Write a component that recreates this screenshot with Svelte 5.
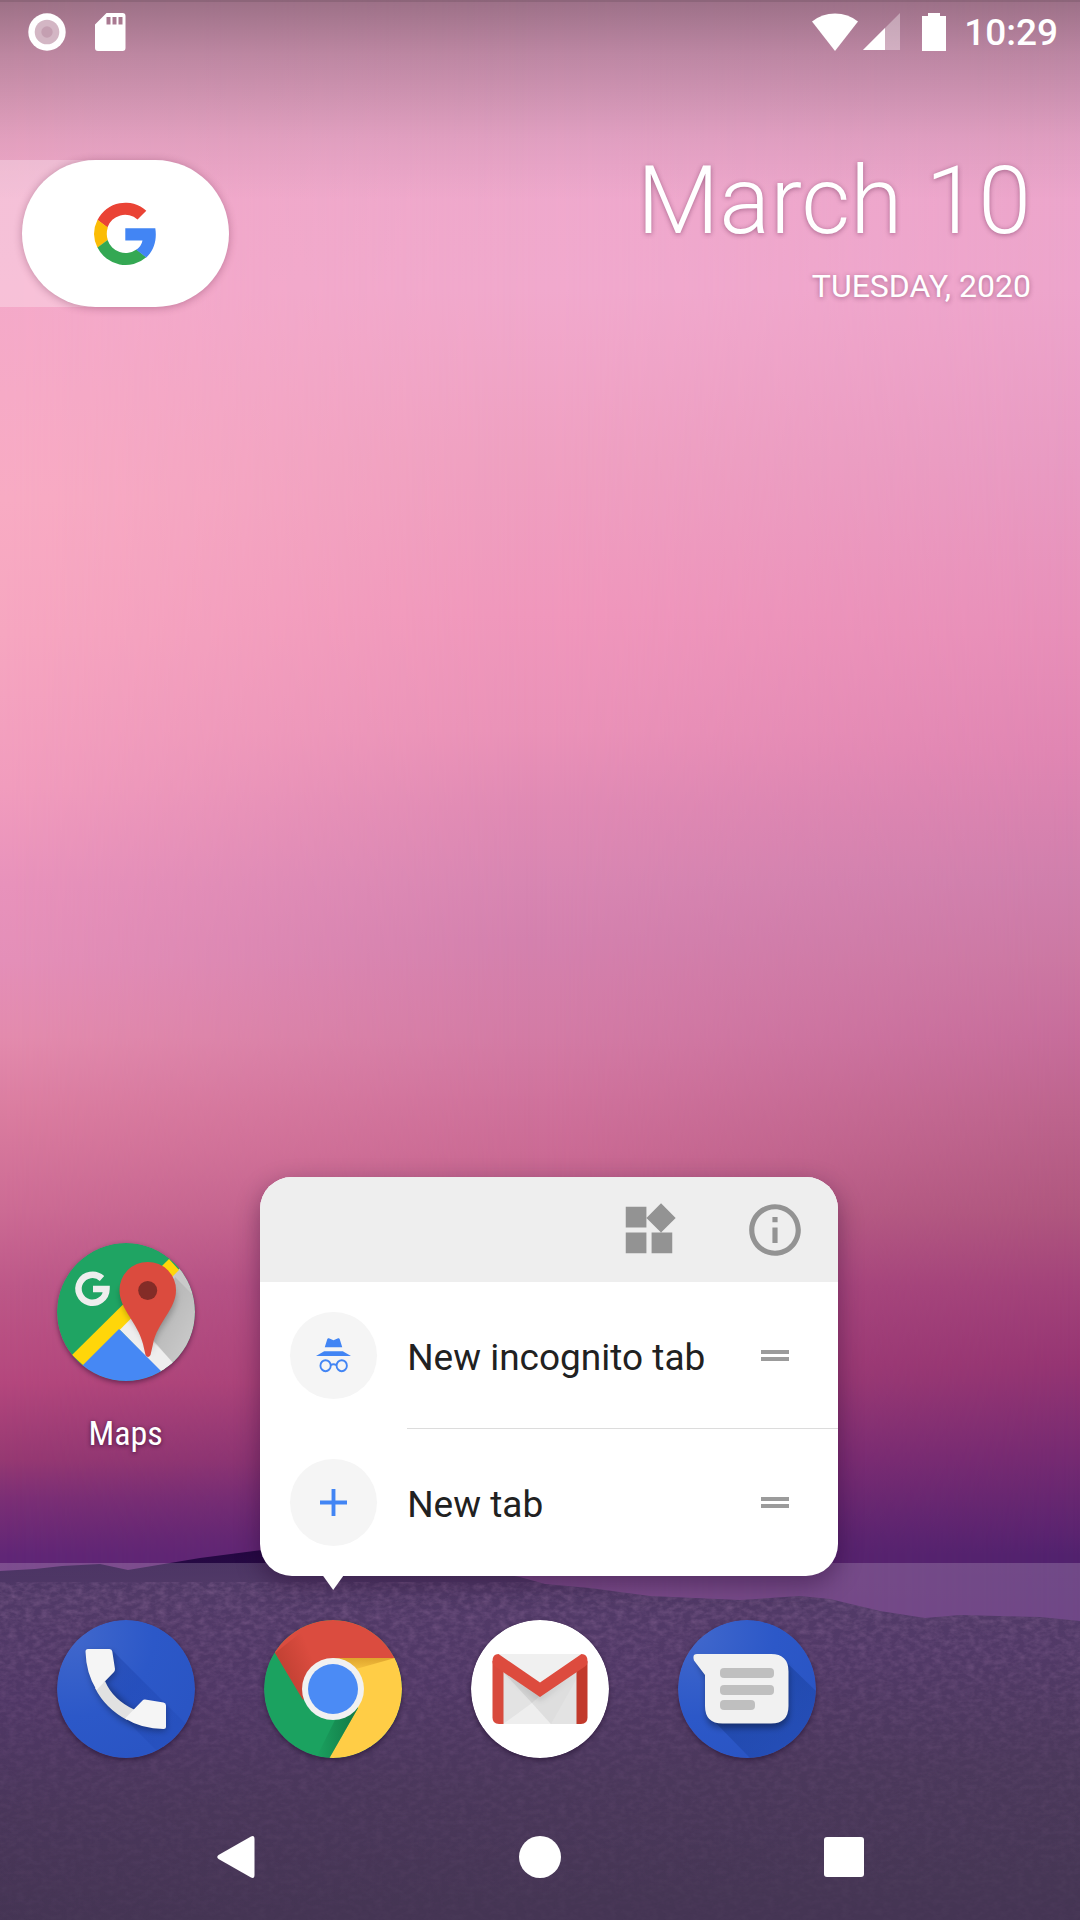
<script>
  const nav = ['Back', 'Home', 'Recents'];
  const shortcuts = [
    { id: 'incognito', label: 'New incognito tab' },
    { id: 'plus', label: 'New tab' }
  ];
  const dock = ['Phone', 'Chrome', 'Gmail', 'Messages'];
</script>

<div class="screen">
  <div class="wallpaper" aria-hidden="true">
    <div class="sky right"></div>
    <div class="sky middle"></div>
    <div class="sky left"></div>
    <svg class="ridge" viewBox="0 0 1080 400" preserveAspectRatio="none">
      <defs>
        <linearGradient id="hill" x1="0" y1="0" x2="0.15" y2="1">
          <stop offset="0" stop-color="#210440" />
          <stop offset="0.14" stop-color="#2c1047" />
          <stop offset="0.4" stop-color="#2f1249" />
          <stop offset="0.7" stop-color="#2c163f" />
          <stop offset="1" stop-color="#2b193c" />
        </linearGradient>
        <clipPath id="hillShape">
          <path d="M0 51 35 49 62 46 100 44 128 50 200 38 262 30 400 34 520 57 545 64 590 68 650 76 740 80 800 76 830 79 880 91 925 98 960 95 1040 97 1080 101 1080 400 0 400z" />
        </clipPath>
        <filter id="grain" x="0" y="0" width="100%" height="100%">
          <feTurbulence type="fractalNoise" baseFrequency="0.12 0.2" numOctaves="3" seed="4" />
          <feColorMatrix values="0 0 0 0 .5  0 0 0 0 .22  0 0 0 0 .5  .7 0 0 0 -.25" />
        </filter>
        <linearGradient id="fade" x1="0" y1="0" x2="0" y2="1">
          <stop offset="0" stop-color="#fff" stop-opacity=".8" /><stop offset=".6" stop-color="#fff" stop-opacity=".25" /><stop offset="1" stop-color="#fff" stop-opacity=".1" />
        </linearGradient>
        <mask id="grainMask"><rect width="1080" height="400" fill="url(#fade)" /></mask>
      </defs>
      <path fill="url(#hill)" d="M0 51 35 49 62 46 100 44 128 50 200 38 262 30 400 34 520 57 545 64 590 68 650 76 740 80 800 76 830 79 880 91 925 98 960 95 1040 97 1080 101 1080 400 0 400z" />
      <g clip-path="url(#hillShape)"><g mask="url(#grainMask)"><rect y="62" width="1080" height="338" filter="url(#grain)" /></g></g>
    </svg>
    <div class="dock-scrim"></div>
    <div class="top-scrim"></div>
  </div>

  <header class="status">
    <svg width="38" height="38" viewBox="0 0 38 38" role="img" aria-label="Recording">
      <circle cx="19" cy="19" r="18.700" fill="#fff" />
      <circle cx="19" cy="19" r="12.300" fill="#d3b6c4" />
      <circle cx="19" cy="19" r="5.700" fill="#c49fb1" />
    </svg>
    <svg class="sd" width="31" height="38" viewBox="0 0 31 38" role="img" aria-label="SD card">
      <path fill="#fff" fill-rule="evenodd" d="M11.500 0H27.500a3 3 0 0 1 3 3v32a3 3 0 0 1-3 3H3a3 3 0 0 1-3-3V11.500zM11.500 4v7.500h4V4zm6 0v7.500h4V4zm6 0v7.500h4V4z" />
    </svg>
    <span class="spring"></span>
    <svg width="46" height="38" viewBox="0 0 46 38" role="img" aria-label="Wi-Fi">
      <path fill="#fff" d="M0 8.500Q10 .5 23 .5T46 8.500L23 38z" />
    </svg>
    <svg class="signal" width="37" height="37" viewBox="0 0 37 37" role="img" aria-label="Signal">
      <path fill="#fff" fill-opacity=".35" d="M37 0v37H0z" />
      <path fill="#fff" d="M22 15v22H0z" />
    </svg>
    <svg class="battery" width="24" height="38" viewBox="0 0 24 38" role="img" aria-label="Battery">
      <path fill="#fff" d="M6 0h12v3h6v35H0V3h6z" />
    </svg>
    <time>10:29</time>
  </header>

  <section class="top">
    <div class="search-band">
      <button class="pill" aria-label="Google search">
        <svg class="google" width="62" height="63" viewBox="1 0 62 63">
          <path fill="#ea4335" d="M3.500 18A31 31 0 0 1 52.300 8.800L43.500 17.400A18.800 18.800 0 0 0 13.400 25.500z" />
          <path fill="#fbbc05" d="M3.500 17.800A31.500 31.500 0 0 0 3.500 45.800L13.800 38A20 20 0 0 1 13.800 25.500z" />
          <path fill="#34a853" d="M3.500 45.500A31.300 31.300 0 0 0 52.300 55.200L42.500 47.500A19 19 0 0 1 13.600 38z" />
          <path fill="#4285f4" d="M31.300 26.200H61.300C63 37 60.500 48 52.300 55.500L42.300 47.800Q47.500 44 48.500 38.500H31.300z" />
        </svg>
      </button>
    </div>
    <div class="date">
      <h1>March 10</h1>
      <p>TUESDAY, 2020</p>
    </div>
  </section>

  <main class="workspace">
    <a class="app" href="#maps">
      <svg class="icon" viewBox="0 0 138 138" aria-hidden="true">
        <defs>
          <clipPath id="disc"><circle cx="69" cy="69" r="69" /></clipPath>
          <linearGradient id="pinShade" x1="0" y1="0" x2="1" y2="1">
            <stop offset="0" stop-color="#000" stop-opacity=".14" />
            <stop offset=".7" stop-color="#000" stop-opacity="0" />
          </linearGradient>
          <filter id="soft" x="-30%" y="-30%" width="160%" height="160%"><feGaussianBlur stdDeviation="3" /></filter>
        </defs>
        <g clip-path="url(#disc)">
          <rect width="138" height="138" fill="#1fa463" />
          <path fill="#c9c9c9" d="M138 10 62 86 138 138z" />
          <path fill="#eee" d="M62 86 75 73 116 120 104 129z" />
          <path fill="#ffd60a" d="M112 16 122 27 27 123 15 112z" />
          <path fill="#4688f4" d="M62 86 106 130V140H8z" />
          <path fill="url(#pinShade)" d="M118 34 150 66V130L116 119 96 99z" />
          <path filter="url(#soft)" fill="#000" fill-opacity=".25" d="M63 50c0-18 56-16 56 2 0 22-19 30-26 58-7-28-30-36-30-60z" />
        </g>
        <path fill="#db4b3e" d="M90.700 19A28 28 0 0 1 119 47.500C119 66 100 80 96 101L93.500 112Q91 116 88.500 112L86 101C81 80 62.500 66 62.500 47.500A28 28 0 0 1 90.700 19z" />
        <circle cx="90.700" cy="47.500" r="9.500" fill="#832c27" />
        <path fill="none" stroke="#eee" stroke-width="6.500" d="M45 35.500A14 14 0 1 0 49.500 46H36" />
      </svg>
      <span>Maps</span>
    </a>

    <div class="popup" role="menu">
      <div class="popup-head">
        <button aria-label="Widgets">
          <svg width="62" height="62" viewBox="0 0 24 24" fill="#939393"><path d="M13 13v8h8v-8h-8zM3 21h8v-8H3v8zM3 3v8h8V3H3zm13.660-1.310L11 7.340 16.660 13l5.660-5.660-5.660-5.650z" /></svg>
        </button>
        <button aria-label="App info">
          <svg width="62" height="62" viewBox="0 0 24 24" fill="#939393"><path d="M11 17h2v-6h-2v6zm1-15C6.480 2 2 6.480 2 12s4.480 10 10 10 10-4.480 10-10S17.520 2 12 2zm0 18c-4.410 0-8-3.590-8-8s3.590-8 8-8 8 3.590 8 8-3.590 8-8 8zM11 9h2V7h-2v2z" /></svg>
        </button>
      </div>
      {#each shortcuts as s (s.id)}
        <button class="shortcut" role="menuitem">
          <span class="bubble">
            {#if s.id === 'incognito'}
              <svg width="35" height="35" viewBox="0 0 34 32" preserveAspectRatio="none">
                <path fill="#4285f4" d="M11 1q.5-1 1.500-.7L17 2l4.500-1.700q1-.3 1.500.7l2.500 7.500h-17zM8 12h18l8 4.500H0z" />
                <g fill="none" stroke="#4285f4" stroke-width="1.800"><circle cx="9.300" cy="25.300" r="5" /><circle cx="25" cy="25.300" r="5" /><path d="M14 24.700q3-1.500 6 0" /></g>
              </svg>
            {:else}
              <svg width="27" height="27" viewBox="0 0 28 28"><path fill="#4285f4" d="M12 0h4v12h12v4H16v12h-4V16H0v-4h12z" /></svg>
            {/if}
          </span>
          <span class="label">
            <span class="name">{s.label}</span>
            <svg width="28" height="11" viewBox="0 0 28 11" fill="#9b9b9b"><path d="M0 0h28v4H0zM0 7h28v4H0z" /></svg>
          </span>
        </button>
      {/each}
    </div>
  </main>

  <nav class="dock">
    {#each dock as name (name)}
      <a class="app" href="#{name.toLowerCase()}" aria-label={name}>
        <svg class="icon" viewBox="0 0 138 138" aria-hidden="true">
          {#if name === 'Phone'}
            <defs>
              <radialGradient id="blue" cx="0.100" cy="0.100" r="1"><stop offset="0" stop-color="#4168cc" /><stop offset=".6" stop-color="#2c58c8" /><stop offset="1" stop-color="#2a55c4" /></radialGradient>
              <linearGradient id="longShade" x1="0" y1="0" x2="1" y2="1"><stop offset="0" stop-color="#12349a" stop-opacity=".35" /><stop offset=".9" stop-color="#12349a" stop-opacity=".08" /></linearGradient>
            </defs>
            <circle cx="69" cy="69" r="69" fill="url(#blue)" />
            <g clip-path="url(#disc)"><path fill="url(#longShade)" d="M55 30 138 113V138H107L39 70z" /></g>
            <path filter="url(#soft)" fill="#000" fill-opacity=".3" d="M30 32H56L59 53 49 64 77 91 88 84 109 87V111C60 114 30 75 30 32z" />
            <path fill="#e1e1e1" d="M48 61Q56 80 78 90L70 100Q48 88 38 68z" />
            <path fill="#f5f5f5" d="M31 29H52.500Q55 29 55.300 31.500L58 49Q58 51 57 52L39.500 70Q29 53 28.500 31.500 28.500 29 31 29z" />
            <path fill="#f5f5f5" d="M88 79.500 106.500 82.500Q109 83 109 85.500V106.500Q109 109 106.500 109 85 109 68 98.500L85.500 80.500Q86.500 79.300 88 79.500z" />
          {:else if name === 'Chrome'}
            <defs>
              <linearGradient id="redShade" x1="0" y1=".6" x2=".6" y2=".3"><stop offset="0" stop-color="#8e2a1c" stop-opacity=".4" /><stop offset="1" stop-color="#8e2a1c" stop-opacity="0" /></linearGradient>
              <linearGradient id="yellowShade" x1="0" y1="0" x2="0" y2="1"><stop offset="0" stop-color="#c98a1d" stop-opacity=".6" /><stop offset="1" stop-color="#c98a1d" stop-opacity=".2" /></linearGradient>
              <linearGradient id="greenShade" x1="1" y1="0" x2="0" y2="0"><stop offset="0" stop-color="#0a5c33" stop-opacity=".6" /><stop offset="1" stop-color="#0a5c33" stop-opacity="0" /></linearGradient>
            </defs>
            <g clip-path="url(#disc)">
              <rect width="138" height="138" fill="#1ba260" />
              <path fill="#db4c3f" d="M11 33 0 0H138V38H69L39 80z" />
              <path fill="url(#redShade)" d="M11 33 40 10 69 38 39 80z" />
              <path fill="#ffcd46" d="M69 38H138V138H65.500L94 88z" />
              <path fill="url(#yellowShade)" d="M69 38H131L92 49z" />
              <path fill="url(#greenShade)" d="M94 88 65.500 138H52L72 98z" />
            </g>
            <circle cx="69" cy="69" r="31" fill="#f1f1f1" />
            <circle cx="69" cy="69" r="25" fill="#4b8bf5" />
          {:else if name === 'Gmail'}
            <circle cx="69" cy="69" r="69" fill="#fff" />
            <path fill="#f0f0f0" d="M27 34H111V80H27z" />
            <path fill="#e3e3e3" d="M32 50 69 76 106 50V104H32z" />
            <path fill="#d3d3d3" d="M32 52 69 76 61 83z" />
            <path fill="#eee" d="M32 104 61 83 80 104z" />
            <path fill="#dadada" d="M61 83 69 76 106 50V58L80 104z" fill-opacity=".6" />
            <path filter="url(#soft)" fill="#000" fill-opacity=".2" d="M32 52 69 80 106 52 69 76z" />
            <path fill="#d84a3d" d="M21.500 41H32.500V104H28Q21.500 104 21.500 97.500z" />
            <path fill="#c2392b" d="M105.500 50 116.500 41V97.500Q116.500 104 110 104H105.500z" />
            <path fill="#dd4b3e" d="M21.500 41Q21.500 34 27.500 34L69 62.500 110.500 34Q116.500 34 116.500 41 116.500 45 114 46.500L69 77 24 46.500Q21.500 45 21.500 41z" />
          {:else}
            <defs><linearGradient id="msgShade" x1="0" y1="0" x2="1" y2="1"><stop offset="0" stop-color="#10307f" stop-opacity=".5" /><stop offset="1" stop-color="#1c43a2" stop-opacity=".3" /></linearGradient></defs>
            <circle cx="69" cy="69" r="69" fill="url(#blue)" />
            <g clip-path="url(#disc)">
              <path fill="url(#msgShade)" d="M108 42 138 71V138H72L33 98z" />
              <path filter="url(#soft)" fill="#000" fill-opacity=".35" d="M18 40H93Q111 40 111 56V92Q111 108 93 108H45Q28 108 28 92V58z" />
            </g>
            <path fill="#f1f1f1" d="M19 34H93Q110.500 34 110.500 51.500V86Q110.500 103.500 93 103.500H44.500Q27 103.500 27 86V55L16 40.500Q14 34 19 34z" />
            <g fill="#bfbfbf"><rect x="42" y="48" width="54" height="10" rx="4" /><rect x="42" y="65" width="54" height="10" rx="4" /><rect x="42" y="80" width="35" height="10" rx="4" /></g>
          {/if}
        </svg>
      </a>
    {/each}
  </nav>

  <nav class="keys">
    {#each nav as name (name)}
      <button aria-label={name}>
        <svg width="42" height="42" viewBox="0 0 42 42" fill="#fff">
          {#if name === 'Back'}
            <path d="M3.500 19 36 .5Q39.500-1 39.500 3V39Q39.500 43 36 41.500L3.500 23Q1 21 3.500 19z" />
          {:else if name === 'Home'}
            <circle cx="21" cy="21" r="21" />
          {:else}
            <rect x="1" y="1" width="40" height="40" rx="3" />
          {/if}
        </svg>
      </button>
    {/each}
  </nav>
</div>

<style>
  :global(body) { margin: 0; }
  .screen {
    position: relative;
    min-height: 100vh;
    display: flex;
    flex-direction: column;
    overflow: hidden;
    isolation: isolate;
    font-family: Roboto, "Noto Sans", sans-serif;
    color: #fff;
  }
  button { border: 0; padding: 0; background: none; font: inherit; color: inherit; cursor: pointer; }
  a { color: inherit; text-decoration: none; }
  svg { display: block; flex: none; }

  .wallpaper, .sky { position: absolute; inset: 0; }
  .wallpaper { z-index: -1; }
  .right {
    background: linear-gradient(180deg, #eaa8cb 0, #eea5cc 15%, #e99bc3 24%, #e88fb9 33%, #e186b3 39%, #d07fac 46%, #cc78a3 50%, #c76d9b 54%, #bd648d 58%, #b0577f 63%, #a3437a 67%, #963573 71%, #752a72 76%, #5a2470 80%, #52226e 81%);
  }
  .middle {
    background: linear-gradient(180deg, #eaa8cb 0, #f1a9cd 15%, #efa0c1 24%, #f097bc 32%, #ea92b8 38%, #e08ab4 42%, #d886b2 46%, #d481ae 49%, #d37ba5 54%, #d0739d 57%, #cb6b95 60%, #bd5f8a 63%, #ab4880 67%, #a03f75 72%, #822f73 76%, #5f2570 80%);
    mask-image: linear-gradient(90deg, #000 50%, transparent);
  }
  .left {
    background: linear-gradient(180deg, #eaa8c8 0, #f4a9c9 15%, #f8abc3 26%, #f6a6c0 33%, #f19cbd 41%, #e892bb 46%, #e48fb8 50%, #e38bad 54%, #da7c9f 58%, #cc6b94 63%, #bd5888 67%, #b4477d 72%, #963972 76%, #7c2f75 78%, #602676 81%);
    mask-image: linear-gradient(90deg, #000, transparent 50%);
  }
  .ridge { position: absolute; left: 0; bottom: 0; width: 100%; height: 400px; }
  .dock-scrim {
    position: absolute; left: 0; right: 0; bottom: 0; height: 357px;
    background: linear-gradient(180deg, rgba(255,255,255,.18), rgba(255,255,255,.12));
  }
  .top-scrim {
    position: absolute; left: 0; right: 0; top: 0; height: 200px;
    background: linear-gradient(180deg, rgba(0,0,0,.4) 2px, rgba(0,0,0,.33) 2px, rgba(0,0,0,.2) 27%, rgba(0,0,0,.06) 68%, transparent);
  }

  .status { display: flex; align-items: center; height: 63px; padding: 0 22px 0 28px; }
  .sd { margin-left: 29px; }
  .spring { flex: 1; }
  .signal { margin-left: 5px; }
  .battery { margin: 0 18px 0 22px; }
  time { padding-top: 3px; font-size: 37px; line-height: 42px; font-weight: 500; }

  .top { display: flex; justify-content: space-between; align-items: flex-start; padding-top: 97px; }
  .search-band { padding-left: 22px; width: 68px; background: rgba(255,255,255,.28); }
  .pill {
    width: 207px; height: 147px; border-radius: 74px; background: #fff;
    display: flex; align-items: center; justify-content: center;
    box-shadow: 0 1px 9px rgba(80,20,50,.32);
  }
  .google { overflow: visible; }
  .date { text-align: right; padding-right: 49px; text-shadow: 0 1px 5px rgba(80,20,60,.45); }
  h1 { margin: 0; font-size: 95px; line-height: 82px; font-weight: 300; }
  p { margin: 23px 0 0; font-size: 32px; line-height: 42px; }

  .workspace {
    flex: 1; display: grid; grid-template-columns: repeat(5, 1fr);
    align-items: end; padding: 0 22px;
  }
  .app { display: flex; flex-direction: column; align-items: center; }
  .icon { width: 138px; height: 138px; border-radius: 50%; box-shadow: 0 2px 5px rgba(20,0,30,.45); }
  .workspace .app { padding-bottom: 122px; }
  .app span { margin-top: 31px; font-family: "Roboto Condensed", Roboto, sans-serif; font-size: 34px; line-height: 42px; text-shadow: 0 1px 4px rgba(40,0,40,.7); }

  .popup {
    position: relative; grid-column: 2 / 5; width: 578px; justify-self: start; margin-left: 31px;
    background: #fff; color: #212121; border-radius: 32px;
    box-shadow: 0 8px 24px rgba(30,0,40,.4);
  }
  .popup::after {
    content: ""; position: absolute; left: 63px; top: 100%; width: 20px; height: 14px;
    background: #fff; clip-path: polygon(0 0, 100% 0, 50% 100%);
  }
  .popup-head { display: flex; justify-content: flex-end; height: 105px; background: #eee; border-radius: 32px 32px 0 0; }
  .popup-head button { width: 126px; display: grid; place-items: center; }
  .shortcut { display: flex; align-items: center; width: 100%; height: 147px; text-align: left; padding-left: 30px; }
  .bubble { width: 87px; height: 87px; border-radius: 50%; background: #f5f5f5; display: grid; place-items: center; flex: none; }
  .label {
    flex: 1; align-self: stretch; margin-left: 30px; padding-right: 49px;
    display: flex; align-items: center; justify-content: space-between;
    font-size: 37px; line-height: 44px; border-bottom: 1px solid #dcdcdc;
  }
  .name { padding-top: 6px; }
  .shortcut:last-child .label { border-bottom-color: transparent; }

  .dock { display: grid; grid-template-columns: repeat(5, 1fr); padding: 44px 22px 36px; }
  .keys { display: flex; justify-content: center; height: 126px; }
  .keys button { width: 304px; display: grid; place-items: center; }
</style>
